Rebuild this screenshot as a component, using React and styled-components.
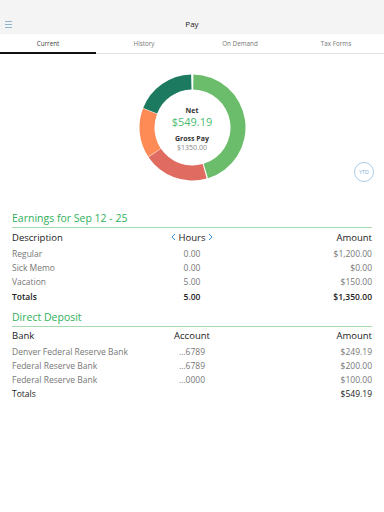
import styled, { createGlobalStyle } from 'styled-components'

const GlobalStyle = createGlobalStyle`
  html, body {
    margin: 0;
    padding: 0;
    background: #fff;
    font-family: "Open Sans", "DejaVu Sans", sans-serif;
  }
`

const Page = styled.div`
  width: 384px;
  height: 512px;
  background: #fff;
  overflow: hidden;
`

const TopBar = styled.header`
  position: relative;
  height: 34px;
  background: #f4f4f4;
  display: flex;
  align-items: flex-end;
  justify-content: center;
  padding-bottom: 5px;
  box-sizing: border-box;
  font-size: 8px;
  color: #222;
`

const MenuIcon = styled.div`
  position: absolute;
  left: 5px;
  bottom: 6px;
  width: 7px;
  display: flex;
  flex-direction: column;
  gap: 2px;

  span {
    display: block;
    height: 1px;
    background: #8eb3cc;
  }
`

const Tabs = styled.nav`
  display: grid;
  grid-template-columns: repeat(4, 1fr);
  height: 20px;
  border-bottom: 1px solid #e3e3e3;
  box-sizing: border-box;
`

const Tab = styled.div`
  display: flex;
  align-items: center;
  justify-content: center;
  font-size: 6.3px;
  color: ${p => (p.$active ? '#444' : '#777')};
  border-bottom: 2px solid ${p => (p.$active ? '#111' : 'transparent')};
  margin-bottom: -1px;
`

const ChartArea = styled.section`
  position: relative;
  height: 152px;
  display: flex;
  justify-content: center;
  padding-top: 20px;
  box-sizing: border-box;
`

const Donut = styled.div`
  position: relative;
  width: 107px;
  height: 107px;
`

const DonutLabel = styled.div`
  position: absolute;
  inset: 0;
  display: flex;
  flex-direction: column;
  align-items: center;
  justify-content: center;
  padding-top: 3px;
`

const LabelTitle = styled.div`
  font-size: 7px;
  font-weight: 700;
  color: #333;
  line-height: 9px;
  margin-top: ${p => p.$gap || 0}px;
`

const LabelValue = styled.div`
  font-size: ${p => p.$size}px;
  color: ${p => p.$color};
  line-height: ${p => p.$size + 2}px;
`

const YtdButton = styled.div`
  position: absolute;
  right: 10px;
  top: 108px;
  width: 20px;
  height: 20px;
  border-radius: 50%;
  border: 1px solid #a9cde6;
  color: #7fb3d8;
  font-size: 5.5px;
  display: flex;
  align-items: center;
  justify-content: center;
  box-sizing: border-box;
`

const Section = styled.section`
  padding: 0 12px;
  margin-top: ${p => p.$top}px;
`

const SectionTitle = styled.h2`
  margin: 0;
  font-size: 10.5px;
  font-weight: 400;
  color: #2fb15a;
  line-height: 14px;
  padding-bottom: 2px;
  border-bottom: 1px solid #a6dbb2;
`

const Row = styled.div`
  display: grid;
  grid-template-columns: 1fr 1fr 1fr;
  align-items: center;
  height: ${p => p.$h || 14}px;
  font-size: ${p => (p.$head ? 9.5 : 8.5)}px;
  color: ${p => (p.$head || p.$total ? '#222' : '#777')};
  font-weight: ${p => (p.$total ? 600 : 400)};
`

const Cell = styled.div`
  white-space: nowrap;
  display: flex;
  align-items: center;
  justify-content: ${p => ({ left: 'flex-start', center: 'center', right: 'flex-end' }[p.$align || 'left'])};
  gap: 3px;
  color: ${p => p.$color || 'inherit'};
`

const Chevron = styled.svg`
  width: 5px;
  height: 8px;
`

const polar = (r, deg) => {
  const a = ((deg - 90) * Math.PI) / 180
  return [53.5 + r * Math.cos(a), 53.5 + r * Math.sin(a)]
}

const arc = (start, end, R = 53, r = 38) => {
  const [x1, y1] = polar(R, start)
  const [x2, y2] = polar(R, end)
  const [x3, y3] = polar(r, end)
  const [x4, y4] = polar(r, start)
  const large = end - start > 180 ? 1 : 0
  return `M${x1} ${y1} A${R} ${R} 0 ${large} 1 ${x2} ${y2} L${x3} ${y3} A${r} ${r} 0 ${large} 0 ${x4} ${y4} Z`
}

const segments = [
  { from: 1, to: 163, color: '#6bbd6c' },
  { from: 164.5, to: 236, color: '#e06b61' },
  { from: 236.5, to: 291, color: '#fe8a56' },
  { from: 291.5, to: 358.5, color: '#1c7a60' },
]

const earnings = [
  ['Regular', '0.00', '$1,200.00'],
  ['Sick Memo', '0.00', '$0.00'],
  ['Vacation', '5.00', '$150.00'],
]

const deposits = [
  ['Denver Federal Reserve Bank', '...6789', '$249.19'],
  ['Federal Reserve Bank', '...6789', '$200.00'],
  ['Federal Reserve Bank', '...0000', '$100.00'],
]

const App = () => {
  return (
    <Page>
      <GlobalStyle />
      <TopBar>
        <MenuIcon><span /><span /><span /></MenuIcon>
        Pay
      </TopBar>
      <Tabs>
        <Tab $active>Current</Tab>
        <Tab>History</Tab>
        <Tab>On Demand</Tab>
        <Tab>Tax Forms</Tab>
      </Tabs>

      <ChartArea>
        <Donut>
          <svg width="107" height="107" viewBox="0 0 107 107">
            {segments.map(s => (
              <path key={s.from} d={arc(s.from, s.to)} fill={s.color} />
            ))}
          </svg>
          <DonutLabel>
            <LabelTitle>Net</LabelTitle>
            <LabelValue $size={11} $color="#4cbc6e">$549.19</LabelValue>
            <LabelTitle $gap={6}>Gross Pay</LabelTitle>
            <LabelValue $size={7} $color="#888">$1350.00</LabelValue>
          </DonutLabel>
        </Donut>
        <YtdButton>YTD</YtdButton>
      </ChartArea>

      <Section $top={5}>
        <SectionTitle>Earnings for Sep 12 - 25</SectionTitle>
        <Row $head $h={18}>
          <Cell>Description</Cell>
          <Cell $align="center">
            <Chevron viewBox="0 0 5 8"><path d="M4 1 L1 4 L4 7" fill="none" stroke="#3d8fd1" strokeWidth="1" /></Chevron>
            Hours
            <Chevron viewBox="0 0 5 8"><path d="M1 1 L4 4 L1 7" fill="none" stroke="#3d8fd1" strokeWidth="1" /></Chevron>
          </Cell>
          <Cell $align="right">Amount</Cell>
        </Row>
        {earnings.map(([d, h, a]) => (
          <Row key={d}>
            <Cell>{d}</Cell>
            <Cell $align="center">{h}</Cell>
            <Cell $align="right">{a}</Cell>
          </Row>
        ))}
        <Row $total $h={16}>
          <Cell>Totals</Cell>
          <Cell $align="center">5.00</Cell>
          <Cell $align="right">$1,350.00</Cell>
        </Row>
      </Section>

      <Section $top={6}>
        <SectionTitle>Direct Deposit</SectionTitle>
        <Row $head $h={17}>
          <Cell>Bank</Cell>
          <Cell $align="center">Account</Cell>
          <Cell $align="right">Amount</Cell>
        </Row>
        {deposits.map(([b, n, a], i) => (
          <Row key={i}>
            <Cell>{b}</Cell>
            <Cell $align="center">{n}</Cell>
            <Cell $align="right">{a}</Cell>
          </Row>
        ))}
        <Row>
          <Cell $color="#222">Totals</Cell>
          <Cell />
          <Cell $align="right" $color="#222">$549.19</Cell>
        </Row>
      </Section>
    </Page>
  )
}

export default App
